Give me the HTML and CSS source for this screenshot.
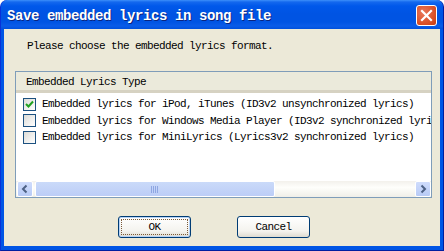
FILE: index.html
```html
<!DOCTYPE html>
<html lang="en">
<head>
  <meta charset="UTF-8">
  <title>Save embedded lyrics in song file</title>
  <link rel="stylesheet" href="styles.css">
</head>
<body>
  <div class="window">
    <div class="titlebar">
      <div class="title">Save embedded lyrics in song file</div>
      <div class="close-btn">
        <svg width="13" height="13" viewBox="0 0 13 13">
          <path d="M2 2 L11 11 M11 2 L2 11" stroke="#fff" stroke-width="2.2" stroke-linecap="square"/>
        </svg>
      </div>
    </div>

    <div class="client">
      <div class="prompt">Please choose the embedded lyrics format.</div>

      <div class="listview">
        <div class="list-header">
          <div class="header-cell">Embedded Lyrics Type</div>
        </div>
        <div class="list-rows">
          <div class="row">
            <span class="checkbox checked">
              <svg width="11" height="11" viewBox="0 0 11 11">
                <path d="M2 5 L4.5 7.5 L9 2.5" stroke="#21a121" stroke-width="2" fill="none"/>
              </svg>
            </span>
            <span class="row-text">Embedded lyrics for iPod, iTunes (ID3v2 unsynchronized lyrics)</span>
          </div>
          <div class="row">
            <span class="checkbox"></span>
            <span class="row-text">Embedded lyrics for Windows Media Player (ID3v2 synchronized lyrics)</span>
          </div>
          <div class="row">
            <span class="checkbox"></span>
            <span class="row-text">Embedded lyrics for MiniLyrics (Lyrics3v2 synchronized lyrics)</span>
          </div>
        </div>
        <!-- horizontal scrollbar -->
        <div class="hscroll">
          <div class="scroll-btn">
            <svg width="14" height="14" viewBox="0 0 14 14">
              <path d="M8.5 3.5 L5 7 L8.5 10.5" stroke="#4d6185" stroke-width="2" fill="none"/>
            </svg>
          </div>
          <div class="track">
            <div class="thumb">
              <svg width="8" height="7" viewBox="0 0 8 7">
                <path d="M0.5 0 V7 M2.5 0 V7 M4.5 0 V7 M6.5 0 V7" stroke="#8ea6e2" stroke-width="1"/>
              </svg>
            </div>
          </div>
          <div class="scroll-btn">
            <svg width="14" height="14" viewBox="0 0 14 14">
              <path d="M5.5 3.5 L9 7 L5.5 10.5" stroke="#4d6185" stroke-width="2" fill="none"/>
            </svg>
          </div>
        </div>
      </div>

      <div class="buttons">
        <button class="btn default">OK</button>
        <button class="btn">Cancel</button>
      </div>
    </div>
  </div>
</body>
</html>
```

FILE: styles.css
```css
html, body {
  margin: 0;
  padding: 0;
  background: #ffffff;
  font-family: 'Liberation Mono', 'DejaVu Sans Mono', monospace;
}

.window {
  width: 444px;
  height: 251px;
  box-sizing: border-box;
  display: flex;
  flex-direction: column;
  background: #0055e5;
  border-radius: 7px 7px 0 0;
  padding: 0 3px 4px 3px;
  border-left: 1px solid #0831d9;
  border-right: 1px solid #001ea0;
  border-bottom: 1px solid #001ea0;
  overflow: hidden;
}

.titlebar {
  height: 29px;
  margin: 0 -3px;
  padding: 0 6px 0 6px;
  display: flex;
  align-items: center;
  justify-content: space-between;
  border-radius: 7px 7px 0 0;
  background: linear-gradient(#3d8ffa 0, #1468ee 2px, #0058ea 6px, #0054e3 14px, #0054e3 22px, #0a5ce8 26px, #0050dc 29px);
}

.title {
  color: #fff;
  font-weight: bold;
  font-size: 14px;
  letter-spacing: -0.4px;
  text-shadow: 1px 1px #0a2580;
  padding-top: 2px;
}

.close-btn {
  width: 19px;
  height: 19px;
  border: 1px solid #fff;
  border-radius: 3px;
  background: radial-gradient(circle at 35% 35%, #e9785a, #d84c22 70%, #c23a12);
  display: flex;
  align-items: center;
  justify-content: center;
  margin-top: 2px;
}

.client {
  flex: 1;
  background: #ece9d8;
  display: flex;
  flex-direction: column;
}

.prompt {
  font-size: 11px;
  letter-spacing: -0.6px;
  line-height: 12px;
  margin: 11px 0 0 23px;
  color: #000;
}

.listview {
  margin: 19px 0 0 11px;
  width: 417px;
  height: 127px;
  box-sizing: border-box;
  border: 1px solid #7f9db9;
  background: #fff;
  display: flex;
  flex-direction: column;
  overflow: hidden;
}

.list-header {
  height: 21px;
  box-sizing: border-box;
  background: #ebeadb;
  border-bottom: 3px solid #d6d2c2;
  display: flex;
  align-items: center;
}

.header-cell {
  font-size: 11px;
  letter-spacing: -0.6px;
  padding: 2px 0 0 10px;
}

.list-rows {
  flex: 1;
  padding-top: 3px;
}

.row {
  height: 16.5px;
  display: flex;
  align-items: center;
  padding-left: 7px;
  white-space: nowrap;
}

.checkbox {
  width: 13px;
  height: 13px;
  box-sizing: border-box;
  border: 1px solid #1c5180;
  background: linear-gradient(135deg, #dcdcd7, #ffffff);
  display: flex;
  align-items: center;
  justify-content: center;
  flex-shrink: 0;
}

.row-text {
  font-size: 11px;
  letter-spacing: -0.6px;
  margin-left: 6px;
}

.hscroll {
  height: 16px;
  display: flex;
  padding: 0 0 0 1px;
  background: linear-gradient(#f3f1ec, #fefefb 40%, #f0efe8);
}

.scroll-btn {
  width: 16px;
  height: 16px;
  box-sizing: border-box;
  border: 1px solid #fff;
  border-radius: 2px;
  background: linear-gradient(#cfdcfc, #b8cbf6);
  display: flex;
  align-items: center;
  justify-content: center;
  flex-shrink: 0;
}

.track {
  flex: 1;
  display: flex;
  padding-left: 2px;
}

.thumb {
  width: 240px;
  box-sizing: border-box;
  border: 1px solid #fff;
  border-radius: 2px;
  background: linear-gradient(#cadaf9, #bccdf7);
  display: flex;
  align-items: center;
  justify-content: center;
}

.buttons {
  display: flex;
  gap: 46px;
  margin: 18px 0 0 114px;
}

.btn {
  width: 73px;
  height: 22px;
  box-sizing: border-box;
  border: 1px solid #003c74;
  border-radius: 3px;
  background: linear-gradient(#ffffff, #f4f3ee 70%, #dedbd0);
  font-family: 'Liberation Mono', 'DejaVu Sans Mono', monospace;
  font-size: 11px;
  letter-spacing: -0.6px;
  color: #000;
  padding: 0;
}

.btn.default {
  box-shadow: inset 0 0 0 1px #b7d3f6;
  outline: 1px dotted #7a5a3a;
  outline-offset: -4px;
}
```
